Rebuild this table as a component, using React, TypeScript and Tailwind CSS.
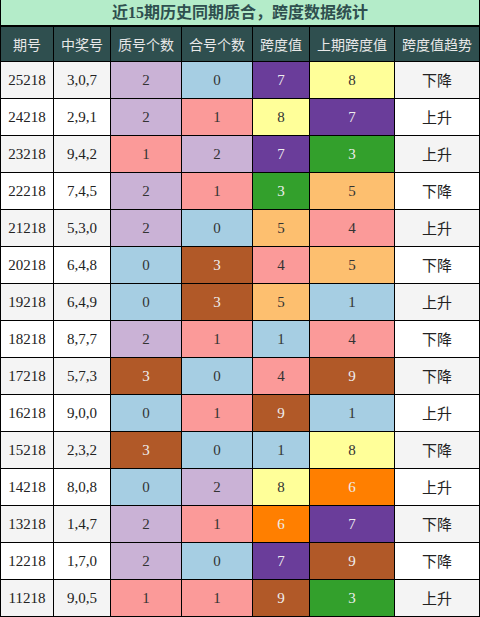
import React from "react";

type Row = [string, string, number, number, number, number, string];

const rows: Row[] = [
  ["25218", "3,0,7", 2, 0, 7, 8, "下降"],
  ["24218", "2,9,1", 2, 1, 8, 7, "上升"],
  ["23218", "9,4,2", 1, 2, 7, 3, "上升"],
  ["22218", "7,4,5", 2, 1, 3, 5, "下降"],
  ["21218", "5,3,0", 2, 0, 5, 4, "上升"],
  ["20218", "6,4,8", 0, 3, 4, 5, "下降"],
  ["19218", "6,4,9", 0, 3, 5, 1, "上升"],
  ["18218", "8,7,7", 2, 1, 1, 4, "下降"],
  ["17218", "5,7,3", 3, 0, 4, 9, "下降"],
  ["16218", "9,0,0", 0, 1, 9, 1, "上升"],
  ["15218", "2,3,2", 3, 0, 1, 8, "下降"],
  ["14218", "8,0,8", 0, 2, 8, 6, "上升"],
  ["13218", "1,4,7", 2, 1, 6, 7, "下降"],
  ["12218", "1,7,0", 2, 0, 7, 9, "下降"],
  ["11218", "9,0,5", 1, 1, 9, 3, "上升"],
];

const countCls: Record<number, string> = {
  0: "bg-[#a6cee3] text-[#333]",
  1: "bg-[#fb9a99] text-[#333]",
  2: "bg-[#cab2d6] text-[#333]",
  3: "bg-[#b15928] text-[#eee]",
};

const spanCls: Record<number, string> = {
  1: "bg-[#a6cee3] text-[#333]",
  3: "bg-[#33a02c] text-[#eee]",
  4: "bg-[#fb9a99] text-[#333]",
  5: "bg-[#fdbf6f] text-[#333]",
  6: "bg-[#ff7f00] text-[#eee]",
  7: "bg-[#6a3d9a] text-[#eee]",
  8: "bg-[#ffff99] text-[#333]",
  9: "bg-[#b15928] text-[#eee]",
};

const headers = ["期号", "中奖号", "质号个数", "合号个数", "跨度值", "上期跨度值", "跨度值趋势"];

const font = "font-['Liberation_Serif','Noto_Sans_CJK_SC',serif]";

export default function App() {
  return (
    <div className="w-[480px] bg-black px-px pb-px">
      <div
        className={`h-[25px] bg-[#b4ecc9] flex items-center justify-center text-[16px] font-bold text-[#2f4f4f] ${font}`}
      >
        近15期历史同期质合，跨度数据统计
      </div>
      <div className="mt-[2px] grid grid-cols-[52px_56px_70px_70px_56px_84px_84px] gap-px">
        {headers.map((h) => (
          <div
            key={h}
            className="h-[34px] bg-[#2f4f4f] text-[#e8e8e8] text-[14px] flex items-center justify-center font-['Noto_Sans_CJK_SC',sans-serif]"
          >
            {h}
          </div>
        ))}
        {rows.map((r, i) => {
          const bg = i % 2 === 0 ? "bg-[#f4f4f4]" : "bg-white";
          const base = `h-[36px] flex items-center justify-center text-[15px] ${font}`;
          return (
            <React.Fragment key={r[0]}>
              <div className={`${base} ${bg} text-[#222]`}>{r[0]}</div>
              <div className={`${base} ${bg} text-[#222]`}>{r[1]}</div>
              <div className={`${base} ${countCls[r[2]]}`}>{r[2]}</div>
              <div className={`${base} ${countCls[r[3]]}`}>{r[3]}</div>
              <div className={`${base} ${spanCls[r[4]]}`}>{r[4]}</div>
              <div className={`${base} ${spanCls[r[5]]}`}>{r[5]}</div>
              <div className={`${base} ${bg} text-[#222] font-['Noto_Sans_CJK_SC',sans-serif]`}>{r[6]}</div>
            </React.Fragment>
          );
        })}
      </div>
    </div>
  );
}
